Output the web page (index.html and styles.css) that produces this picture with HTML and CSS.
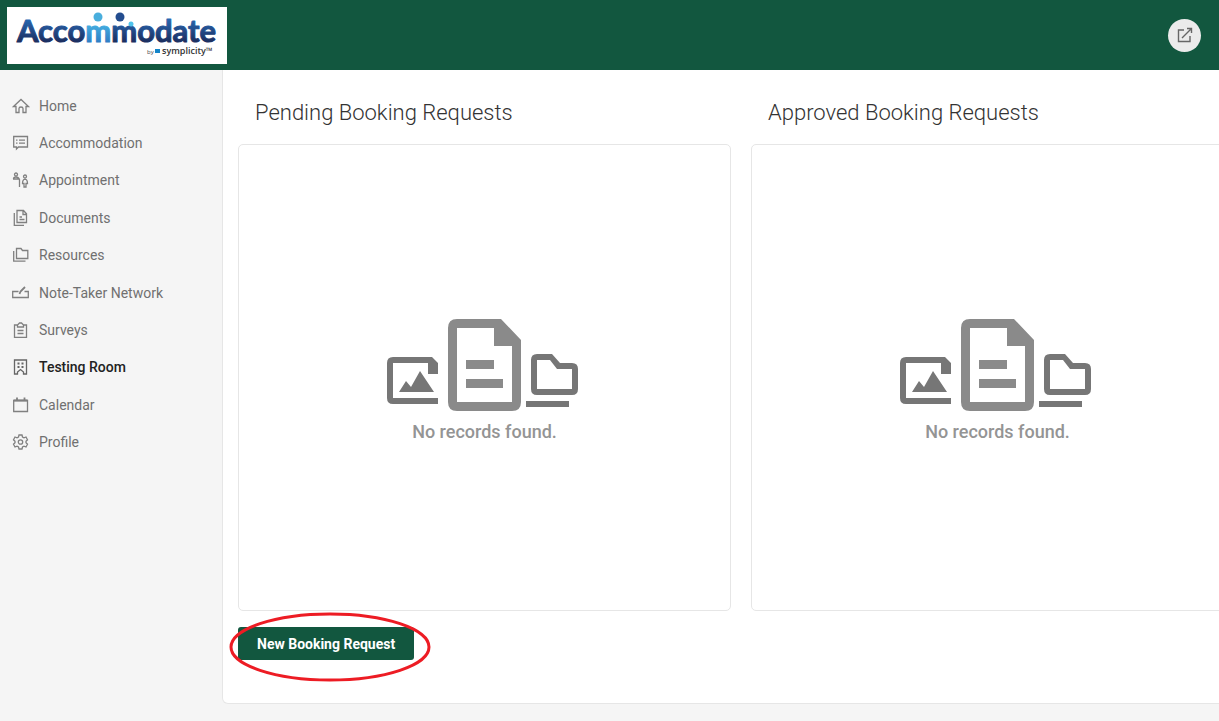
FILE: index.html
```html
<!DOCTYPE html>
<html lang="en">
<head>
<meta charset="utf-8">
<title>Accommodate - Testing Room</title>
<link rel="stylesheet" href="styles.css">
</head>
<body>
<svg class="defs" width="0" height="0" aria-hidden="true">
  <defs>
    <symbol id="empty" viewBox="0 0 192 92">
      <g fill="#767676">
        <path fill-rule="evenodd" d="M6 38H45L51 44V55H41V44H6V79H51V85H6Q0 85 0 79V44Q0 38 6 38Z"/>
        <path d="M12 73L19 62L24 68L33 52L47 73Z"/>
        <path fill-rule="evenodd" d="M150 35H165L173 44H185Q191 44 191 50V70Q191 76 185 76H150Q144 76 144 70V41Q144 35 150 35ZM150 41V70H185V50H170L163 41Z"/>
        <path d="M139 82H182V88H139Z"/>
      </g>
      <path fill="#8a8a8a" fill-rule="evenodd" d="M70 0H114L134 21V83Q134 92 125 92H70Q61 92 61 83V9Q61 0 70 0ZM70 9V83H125V27H107V9ZM79 41H107V50H79ZM79 60H116V69H79Z"/>
    </symbol>
  </defs>
</svg>
<header class="topbar">
  <a class="logo" href="#" aria-label="Accommodate by Symplicity">
    <svg width="220" height="57" viewBox="0 0 220 57">
      <defs>
        <linearGradient id="navy" gradientUnits="userSpaceOnUse" x1="0" y1="10" x2="0" y2="36">
          <stop offset="0" stop-color="#2a6cb8"/><stop offset="1" stop-color="#1b2b5c"/>
        </linearGradient>
        <linearGradient id="sky" gradientUnits="userSpaceOnUse" x1="0" y1="10" x2="0" y2="36">
          <stop offset="0" stop-color="#4fc3ec"/><stop offset="1" stop-color="#2d7cc4"/>
        </linearGradient>
      </defs>
      <text class="logo-name" x="10" y="35" fill="url(#navy)" stroke="url(#navy)">Acco<tspan fill="url(#sky)" stroke="url(#sky)">m</tspan>modate</text>
      <circle cx="91" cy="10" r="4.500" fill="#49aedd"/>
      <circle cx="113" cy="10" r="4.500" fill="#234d8f"/>
      <circle cx="124" cy="17" r="2.500" fill="#4fc3ec"/>
      <text class="logo-by" x="140" y="47">by</text>
      <rect x="148" y="42" width="5" height="4" fill="#1485c9"/>
      <text class="logo-maker" x="155" y="47">symplicity™</text>
    </svg>
  </a>
  <button class="launch" type="button" aria-label="Open in new window">
    <svg width="16" height="16" viewBox="0 0 16 16" fill="none" stroke="#666" stroke-width="1.4"><path d="M7 3H1.500V14.500H13V9M5 11L14.500 1.500M10 1.500H14.500V6"/></svg>
  </button>
</header>
<div class="shell">
  <nav class="sidebar">
    <ul class="menu">
      <li><a href="#"><svg class="icon" viewBox="0 0 16 16"><path d="M.500 8.500L8 1.500L15.500 8.500H13V14.500H10V10.500Q10 9 8 9T6 10.500V14.500H3V8.500Z"/></svg>Home</a></li>
      <li><a href="#"><svg class="icon" viewBox="0 0 16 16"><path d="M.700 1.500H14.500V12H5.500L3.500 14V12H.700ZM3 5.200H4.500M6 5.200H12M3 8.200H4.500M6 8.200H12"/></svg>Accommodation</a></li>
      <li><a href="#"><svg class="icon" viewBox="0 0 16 16"><circle cx="3" cy="2.500" r="1.500"/><path d="M.500 7Q.500 5 3 5T6.500 7.500V15M0 7H6.500"/><circle cx="12" cy="4.500" r="1.500"/><path d="M12 7.200Q9.500 7.500 9.500 11.500H11V15H13V11.500H14.500Q14.500 7.500 12 7.200"/></svg>Appointment</a></li>
      <li><a href="#"><svg class="icon" viewBox="0 0 16 16"><path d="M4 .500H10.500L13.500 3.700V12.500H4ZM10 1V4.500H13.500M6.500 7H9M6.500 9.500H11.500M1.300 3V15.300H11"/></svg>Documents</a></li>
      <li><a href="#"><svg class="icon" viewBox="0 0 16 16"><path d="M3.500 1.500H8L9.500 3.500H14.800V11.500H3.500ZM.700 4V14.200H12.500"/></svg>Resources</a></li>
      <li><a href="#"><svg class="icon" viewBox="0 0 16 16"><path d="M5.500 6.500H-.300V12.500H15.300V6.500H11.500"/><path d="M6.500 9L7.500 6.500L12 2" stroke-width="1.800"/></svg>Note-Taker Network</a></li>
      <li><a href="#"><svg class="icon" viewBox="0 0 16 16"><path d="M4.500 3H1.500V15.300H13.500V3H10.500M4.500 5V3L6.500 1H8.500L10.500 3V5ZM4.500 8.500H10.500M4.500 11.500H10.500"/></svg>Surveys</a></li>
      <li><a class="current" href="#" aria-current="page"><svg class="icon" viewBox="0 0 16 16"><path d="M1.500 1H13.500V15H10.500V13L7.500 10.500L4.500 13V15H1.500Z"/><path d="M4.500 4.500H6.500M8.500 4.500H10.500M4.500 8H6.500M8.500 8H10.500" stroke-width="1.800"/></svg>Testing Room</a></li>
      <li><a href="#"><svg class="icon" viewBox="0 0 16 16"><path d="M.700 3.500H14.500V14.500H.700Z"/><path d="M.700 3.500H14.500M4 .500V4M11.500 .500V4" stroke-width="1.800"/></svg>Calendar</a></li>
      <li><a href="#"><svg class="icon" viewBox="0 0 16 16"><path d="M6 1H9L9.500 3L11 3.800L13 3L14.500 5.800L13 7.200V8.800L14.500 10.200L13 13L11 12.200L9.500 13L9 15H6L5.500 13L4 12.200L2 13L.500 10.200L2 8.800V7.200L.500 5.800L2 3L4 3.800L5.500 3Z"/><circle cx="7.500" cy="8" r="2.200"/></svg>Profile</a></li>
    </ul>
  </nav>
  <main class="content">
    <div class="boards">
      <section class="board">
        <h2>Pending Booking Requests</h2>
        <div class="panel">
          <svg class="empty-art" aria-hidden="true"><use href="#empty"/></svg>
          <p>No records found.</p>
        </div>
      </section>
      <section class="board">
        <h2>Approved Booking Requests</h2>
        <div class="panel">
          <svg class="empty-art" aria-hidden="true"><use href="#empty"/></svg>
          <p>No records found.</p>
        </div>
      </section>
    </div>
    <div class="action">
      <button class="primary" type="button">New Booking Request</button>
      <svg class="ring" viewBox="0 0 202 70" aria-hidden="true"><ellipse cx="101" cy="35" rx="99" ry="33"/></svg>
    </div>
  </main>
</div>
</body>
</html>
```

FILE: styles.css
```css
* { box-sizing: border-box; }
body {
  margin: 0;
  min-height: 100vh;
  background: #f5f5f5;
  font-family: Roboto, "Liberation Sans", sans-serif;
  overflow-x: hidden;
}
.defs { position: absolute; }
.topbar {
  display: flex;
  align-items: center;
  justify-content: space-between;
  height: 70px;
  padding: 0 18px 0 7px;
  background: #12573f;
}
.logo { display: block; height: 57px; background: #fff; }
.logo svg { display: block; }
.logo-name { font: 700 31px Lato, sans-serif; stroke-width: 1; stroke-linejoin: round; }
.logo-by { font: 6px "Open Sans", sans-serif; fill: #444; }
.logo-maker { font: 600 9px "Open Sans", sans-serif; fill: #333; }
.launch {
  display: grid;
  place-items: center;
  width: 33px;
  height: 33px;
  padding: 0;
  border: 0;
  border-radius: 50%;
  background: #ebebeb;
}
.shell { display: flex; }
.sidebar { flex: 0 0 222px; padding-top: 17px; }
.menu {
  display: grid;
  grid-auto-rows: 1fr;
  height: 374px;
  margin: 0;
  padding: 0;
  list-style: none;
}
.menu a {
  display: flex;
  align-items: center;
  gap: 10px;
  height: 100%;
  padding-left: 13px;
  color: #707070;
  font-size: 14px;
  text-decoration: none;
}
.menu .current { color: #222; font-weight: 500; }
.icon {
  width: 16px;
  height: 16px;
  overflow: visible;
  fill: none;
  stroke: #808080;
  stroke-width: 1.3;
}
.current .icon { stroke: #666; }
.content {
  flex: 1 0 auto;
  padding: 25px 15px 43px;
  border: 1px solid #e6e6e6;
  border-top: 0;
  border-radius: 0 0 0 6px;
  background: #fff;
}
.boards {
  display: grid;
  grid-template-columns: repeat(2, minmax(493px, 1fr));
  gap: 20px;
}
.board h2 {
  margin: 0 0 13px;
  padding-left: 17px;
  color: #333;
  font-size: 22px;
  font-weight: 300;
  line-height: 36px;
}
.panel {
  display: flex;
  flex-direction: column;
  align-items: center;
  justify-content: center;
  min-height: 467px;
  padding-top: 8px;
  border: 1px solid #e6e6e6;
  border-radius: 5px;
}
.empty-art { width: 192px; height: 92px; margin-right: 4px; }
.panel p {
  margin: 8px 0 0;
  color: #949494;
  font-size: 18px;
  font-weight: 500;
  line-height: 26px;
}
.action { position: relative; margin-top: 16px; }
.primary {
  display: block;
  height: 33px;
  padding: 0 19px;
  border: 0;
  border-radius: 3px;
  background: #12573f;
  color: #fff;
  font: 700 14px Roboto, sans-serif;
}
.ring {
  position: absolute;
  top: -15px;
  left: -9px;
  width: 202px;
  height: 70px;
  fill: none;
  stroke: #ed1c24;
  stroke-width: 3;
  pointer-events: none;
}
```
